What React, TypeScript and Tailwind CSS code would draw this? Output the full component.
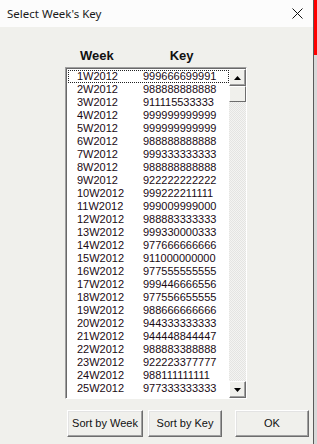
import React from 'react'

const rows: [string, string][] = [
  ['1W2012', '999666699991'],
  ['2W2012', '988888888888'],
  ['3W2012', '911115533333'],
  ['4W2012', '999999999999'],
  ['5W2012', '999999999999'],
  ['6W2012', '988888888888'],
  ['7W2012', '999333333333'],
  ['8W2012', '988888888888'],
  ['9W2012', '922222222222'],
  ['10W2012', '999222211111'],
  ['11W2012', '999009999000'],
  ['12W2012', '988883333333'],
  ['13W2012', '999330000333'],
  ['14W2012', '977666666666'],
  ['15W2012', '911000000000'],
  ['16W2012', '977555555555'],
  ['17W2012', '999446666556'],
  ['18W2012', '977556655555'],
  ['19W2012', '988666666666'],
  ['20W2012', '944333333333'],
  ['21W2012', '944448844447'],
  ['22W2012', '988883388888'],
  ['23W2012', '922223377777'],
  ['24W2012', '988111111111'],
  ['25W2012', '977333333333'],
]

function Btn({ label, w }: { label: string; w: string }) {
  return (
    <button
      className={`${w} h-[27px] bg-[#f0f0ec] border border-t-white border-l-white border-r-[#6d6d6d] border-b-[#6d6d6d] shadow-[inset_-1px_-1px_0_#a0a0a0,inset_1px_1px_0_#e3e3e3] text-[11px] text-[#111] flex items-center justify-center`}
    >
      {label}
    </button>
  )
}

function ScrollBtn({ up }: { up?: boolean }) {
  return (
    <div className="w-[17px] h-[17px] bg-[#f0f0ec] border border-t-white border-l-white border-r-[#6d6d6d] border-b-[#6d6d6d] shadow-[inset_-1px_-1px_0_#a0a0a0] flex items-center justify-center">
      <svg width="7" height="4" viewBox="0 0 7 4">
        {up ? <path d="M3.5 0 L7 4 L0 4 Z" fill="#000" /> : <path d="M0 0 L7 0 L3.5 4 Z" fill="#000" />}
      </svg>
    </div>
  )
}

export default function App() {
  return (
    <div className="flex w-[317px] h-[444px] overflow-hidden" style={{ fontFamily: '"Liberation Sans", Arial, sans-serif' }}>
      <div className="w-[313px] h-full flex flex-col bg-[#f0f0ec]">
        <div className="h-[27px] bg-[#fcfcfc] flex items-center justify-between pl-[7px] pr-[10px]">
          <span className="text-[11.5px] text-[#1a1a1a]" style={{ fontFamily: '"Noto Sans", sans-serif' }}>Select Week's Key</span>
          <svg width="11" height="11" viewBox="0 0 11 11">
            <path d="M0.5 0.5 L10.5 10.5 M10.5 0.5 L0.5 10.5" stroke="#111" strokeWidth="1" />
          </svg>
        </div>

        <div className="flex text-[13px] font-bold text-[#111] mt-[20px] h-[18px] items-center">
          <span className="ml-[80px]">Week</span>
          <span className="ml-[56px]">Key</span>
        </div>

        <div className="ml-[65px] mt-[2px] w-[182px] h-[332px] border border-t-[#a0a0a0] border-l-[#a0a0a0] border-r-white border-b-white flex bg-white">
          <div className="flex-1 flex flex-col pt-[1px] pl-[1px] border-t border-l border-[#696969]">
            {rows.map(([w, k], i) => (
              <div
                key={w}
                className={`h-[13px] flex items-center text-[11px] text-[#1a0a14] ${i === 0 ? 'outline outline-1 outline-dotted outline-[#222] -outline-offset-1' : ''}`}
              >
                <span className="w-[75px] pl-[9px]">{w}</span>
                <span>{k}</span>
              </div>
            ))}
          </div>
          <div className="w-[17px] flex flex-col border-t border-[#696969] bg-[repeating-conic-gradient(#f4f4f2_0_25%,#e4e4e2_0_50%)] bg-[length:2px_2px]">
            <ScrollBtn up />
            <div className="w-[17px] h-[16px] bg-[#f0f0ec] border border-t-white border-l-white border-r-[#6d6d6d] border-b-[#6d6d6d]" />
            <div className="flex-1" />
            <ScrollBtn />
          </div>
        </div>

        <div className="flex mt-[11px] ml-[67px]">
          <Btn label="Sort by Week" w="w-[76px]" />
          <div className="w-[5px]" />
          <Btn label="Sort by Key" w="w-[74px]" />
          <div className="w-[13px]" />
          <Btn label="OK" w="w-[74px]" />
        </div>
      </div>
      <div className="w-px h-full bg-[#5a5a5a]" />
      <div className="flex-1 h-full flex flex-col">
        <div className="h-[55px] bg-[#ff0000]" />
        <div className="flex-1 bg-[#d8d8d8]" />
      </div>
    </div>
  )
}
